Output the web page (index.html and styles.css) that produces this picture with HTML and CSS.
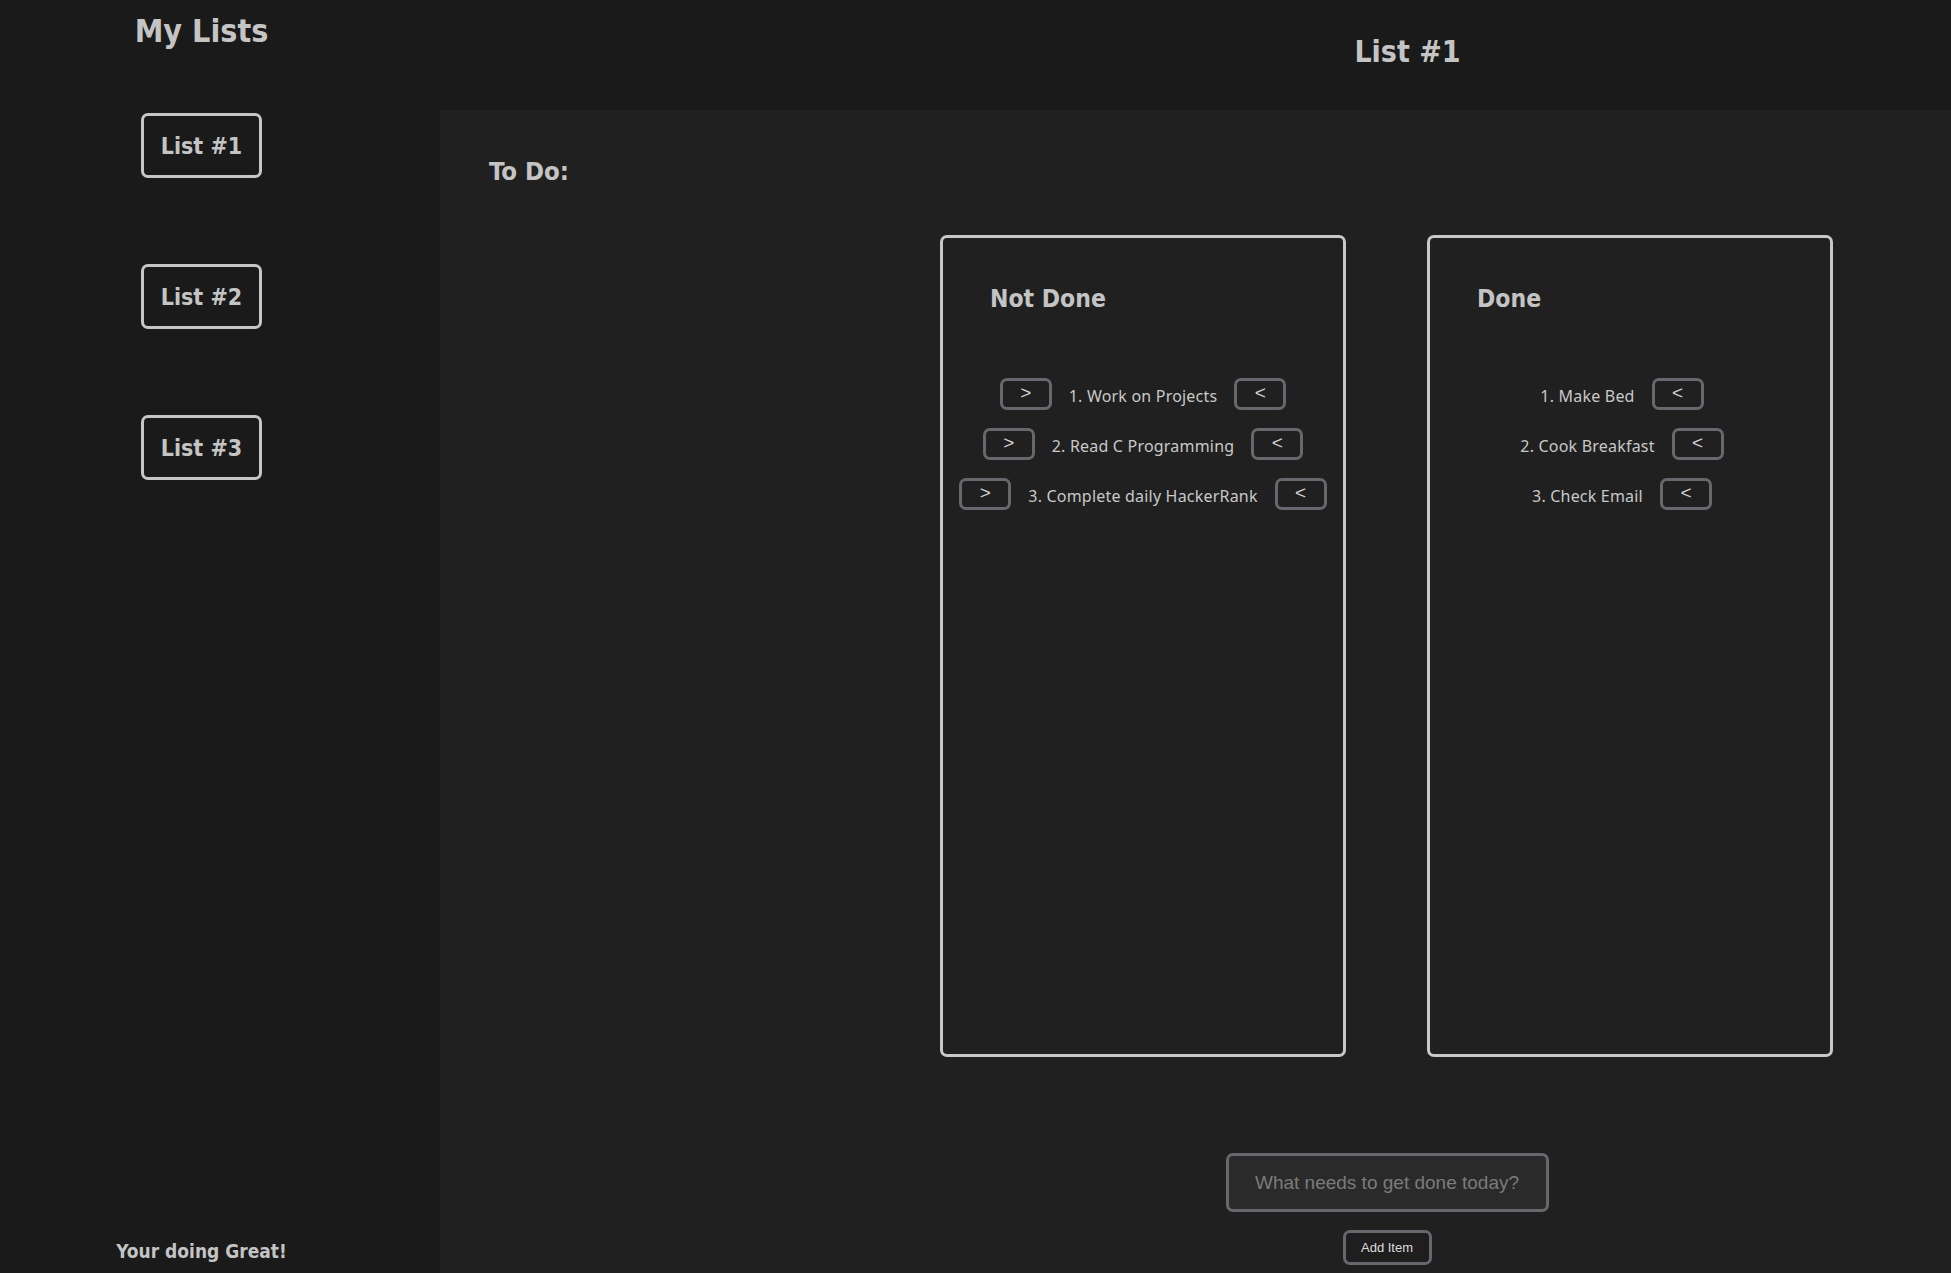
FILE: index.html
```html
<!DOCTYPE html>
<html lang="en">
<head>
<meta charset="utf-8">
<title>My Lists</title>
<link rel="stylesheet" href="styles.css">
</head>
<body>
<div class="app">
  <aside class="sidebar">
    <h1 class="sidebar-title">My Lists</h1>
    <nav class="list-nav">
      <button class="list-btn">List #1</button>
      <button class="list-btn">List #2</button>
      <button class="list-btn">List #3</button>
    </nav>
    <p class="sidebar-footer">Your doing Great!</p>
  </aside>
  <main class="main">
    <header class="topbar">
      <h1 class="page-title">List #1</h1>
    </header>
    <section class="panel">
      <h2 class="section-title">To Do:</h2>
      <div class="board">
        <div class="cards">
          <div class="card">
            <h2 class="card-title">Not Done</h2>
            <ul class="items">
              <li class="row"><button class="mini-btn">&gt;</button><span class="item-text">1. Work on Projects</span><button class="mini-btn">&lt;</button></li>
              <li class="row"><button class="mini-btn">&gt;</button><span class="item-text">2. Read C Programming</span><button class="mini-btn">&lt;</button></li>
              <li class="row"><button class="mini-btn">&gt;</button><span class="item-text">3. Complete daily HackerRank</span><button class="mini-btn">&lt;</button></li>
            </ul>
          </div>
          <div class="card">
            <h2 class="card-title">Done</h2>
            <ul class="items">
              <li class="row row-done"><span class="item-text">1. Make Bed</span><button class="mini-btn">&lt;</button></li>
              <li class="row row-done"><span class="item-text">2. Cook Breakfast</span><button class="mini-btn">&lt;</button></li>
              <li class="row row-done"><span class="item-text">3. Check Email</span><button class="mini-btn">&lt;</button></li>
            </ul>
          </div>
        </div>
        <form class="add-form">
          <input class="add-input" type="text" placeholder="What needs to get done today?">
          <button class="add-btn" type="button">Add Item</button>
        </form>
      </div>
    </section>
  </main>
</div>
</body>
</html>
```
FILE: styles.css
```css
* { box-sizing: border-box; }

html, body {
  margin: 0;
  padding: 0;
  height: 100%;
}

body {
  background: #202020;
  color: #c4c4c4;
  font-family: "DejaVu Sans Condensed", "DejaVu Sans", sans-serif;
  overflow: hidden;
}

.app {
  display: flex;
  height: 100vh;
}

.sidebar {
  width: 440px;
  flex: 0 0 440px;
  background: #1a1a1a;
  padding-right: 37px;
  display: flex;
  flex-direction: column;
  align-items: center;
}

.sidebar-title,
.page-title,
.section-title,
.card-title,
.list-btn,
.sidebar-footer {
  font-family: "DejaVu Sans Condensed", "DejaVu Sans", sans-serif;
  font-stretch: condensed;
  font-weight: bold;
  color: #c4c4c4;
}

.sidebar-title {
  font-size: 32px;
  line-height: 38px;
  margin: 12px 0 0;
}

.list-nav {
  display: flex;
  flex-direction: column;
  gap: 86px;
  margin-top: 63px;
}

.list-btn {
  width: 121px;
  height: 65px;
  background: transparent;
  border: 3px solid #c6c6c6;
  border-radius: 7px;
  font-size: 23px;
  padding: 0;
  cursor: pointer;
}

.sidebar-footer {
  margin: auto 0 0;
  font-size: 19px;
  line-height: 24px;
  padding-bottom: 10px;
}

.main {
  flex: 1;
  display: flex;
  flex-direction: column;
  min-width: 0;
}

.topbar {
  height: 110px;
  flex: 0 0 110px;
  background: #1a1a1a;
  padding-left: 424px;
  text-align: center;
}

.page-title {
  font-size: 30px;
  line-height: 34px;
  margin: 0;
  padding-top: 35px;
}

.panel {
  flex: 1;
  background: #202020;
  padding: 0 118px 0 49px;
}

.section-title {
  font-size: 25.5px;
  line-height: 28px;
  margin: 47px 0 0;
}

.board {
  margin-left: 451px;
  width: 894px;
}

.cards {
  display: flex;
  gap: 81px;
  margin-top: 50px;
}

.card {
  width: 406px;
  height: 822px;
  border: 3px solid #c8c8c8;
  border-radius: 7px;
  padding: 47px 20px 0 47px;
}

.card-title {
  font-size: 24.5px;
  line-height: 28px;
  margin: 0;
}

.items {
  list-style: none;
  margin: 65px 0 0;
  padding: 0;
  display: flex;
  flex-direction: column;
  gap: 18px;
  margin-left: -44px;
  margin-right: -17px;
}

.row {
  display: flex;
  align-items: center;
  justify-content: center;
  height: 32px;
}

.row-done {
  padding-right: 16px;
}

.item-text {
  font-family: "Noto Sans", sans-serif;
  font-size: 16px;
  color: #c8c8c8;
  margin: 0 17px;
  padding-top: 3px;
  white-space: nowrap;
  letter-spacing: 0.2px;
}

.row-done .item-text {
  margin-left: 0;
}

.mini-btn {
  width: 52px;
  height: 32px;
  flex: 0 0 52px;
  background: transparent;
  border: 3px solid #67686e;
  border-radius: 7px;
  color: #d4d4d4;
  font-family: "Liberation Sans", sans-serif;
  font-size: 19px;
  line-height: 1;
  padding: 0 0 3px;
  cursor: pointer;
}

.add-form {
  display: flex;
  flex-direction: column;
  align-items: center;
  margin-top: 96px;
}

.add-input {
  width: 323px;
  height: 59px;
  background: #2a2a2a;
  border: 3px solid #67686e;
  border-radius: 7px;
  color: #c8c8c8;
  font-family: "Liberation Sans", sans-serif;
  font-size: 19px;
  text-align: center;
  outline: none;
  padding-top: 2px;
}

.add-input::placeholder {
  color: #7b7b7b;
}

.add-btn {
  margin-top: 18px;
  width: 89px;
  height: 35px;
  background: #1e1e1e;
  border: 3px solid #67686e;
  border-radius: 7px;
  color: #dcdcdc;
  font-family: "Liberation Sans", sans-serif;
  font-size: 13px;
  padding: 0;
  cursor: pointer;
}
```
